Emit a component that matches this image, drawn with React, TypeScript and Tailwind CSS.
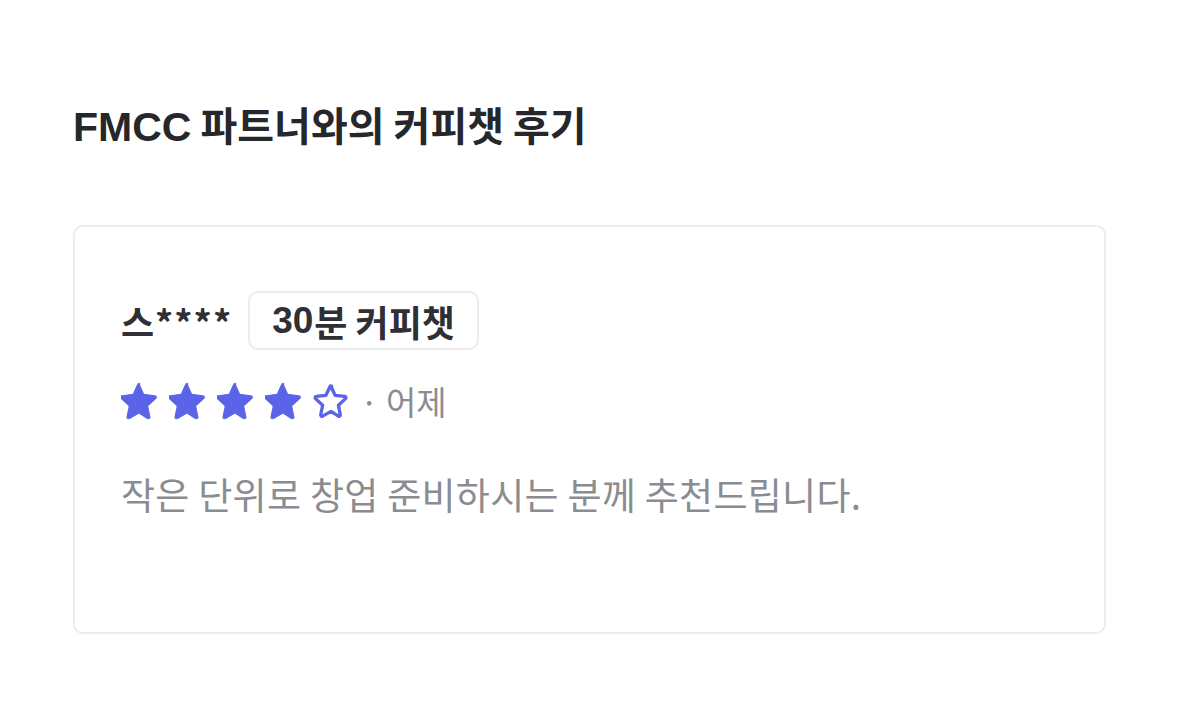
const Star = ({ filled }: { filled: boolean }) => (
  <svg viewBox="2.2 2.2 19.6 19.6" className="w-[36px] h-[36px]" aria-hidden="true">
    <path
      d="M12 2.8l2.6 5.6 6.1.7c.7.1 1 .9.5 1.4l-4.5 4.2 1.2 6c.1.7-.6 1.2-1.2.9L12 18.6l-5.3 3c-.6.3-1.3-.2-1.2-.9l1.2-6-4.5-4.2c-.5-.5-.2-1.3.5-1.4l6.1-.7L11.4 2.8c.2-.4.9-.4 1.1 0z"
      fill={filled ? '#5b64e8' : 'none'}
      stroke="#5b64e8"
      strokeWidth={filled ? 0.6 : 2.1}
      strokeLinejoin="round"
      transform={filled ? undefined : 'translate(12 12) scale(0.86) translate(-12 -12)'}
    />
  </svg>
);

const latin = { fontFamily: '"Liberation Sans", "Noto Sans CJK KR", sans-serif' };

const App = () => {
  const rating = 4;

  return (
    <div
      className="min-h-screen bg-white px-[73px] pt-[96px]"
      style={{ fontFamily: '"Noto Sans CJK KR", "Noto Sans", sans-serif' }}
    >
      <h2 className="text-[40px] font-bold leading-[56px] text-[#26272b]">
        <span style={latin} className="text-[41px]">FMCC</span> 파트너와의 커피챗 후기
      </h2>

      <div className="mt-[70px] w-[1033px] h-[409px] border-2 border-[#ececee] rounded-[10px] px-[46px] pt-[64px]">
        <div className="flex items-center gap-[16px]">
          <span className="text-[36px] font-bold leading-[48px] text-[#2f3036] tracking-[1px]">스****</span>
          <span className="border-2 border-[#ececee] rounded-[10px] px-[22px] h-[59px] flex items-center text-[36px] font-bold text-[#2f3036]">
            <span style={latin} className="text-[37px] mr-[1px]">30</span>분 커피챗
          </span>
        </div>

        <div className="mt-[31px] flex items-center">
          <div className="flex gap-[12px]">
            {[1, 2, 3, 4, 5].map((i) => (
              <Star key={i} filled={i <= rating} />
            ))}
          </div>
          <span className="ml-[11px] text-[33px] leading-[40px] text-[#8b8c91]">· 어제</span>
        </div>

        <p className="mt-[49px] text-[37px] leading-[48px] text-[#8b8c91] tracking-[0.3px]">
          작은 단위로 창업 준비하시는 분께 추천드립니다.
        </p>
      </div>
    </div>
  );
};

export default App;
